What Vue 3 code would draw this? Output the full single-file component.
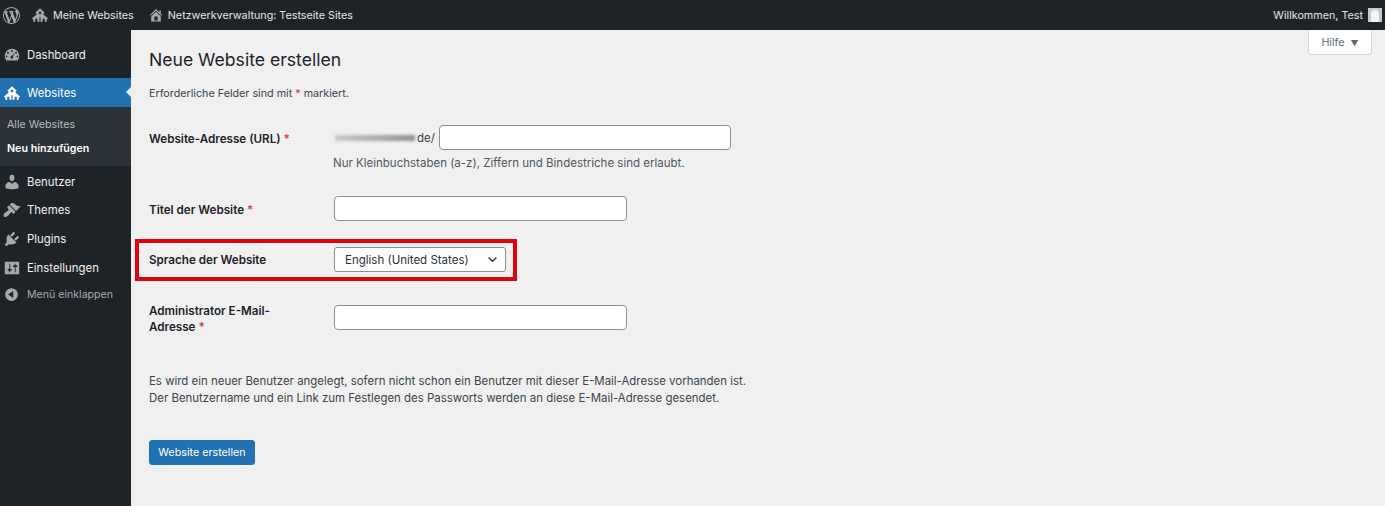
<script setup>
const wp = 'M20 10c0-5.51-4.49-10-10-10C4.48 0 0 4.49 0 10c0 5.52 4.48 10 10 10 5.51 0 10-4.48 10-10zM7.78 15.37L4.37 6.22c.55-.02 1.17-.08 1.17-.08.5-.06.44-1.13-.06-1.11 0 0-1.45.11-2.37.11-.18 0-.37 0-.58-.01C4.12 2.69 6.89 1.03 10 1.03c2.32 0 4.43.87 6.03 2.34-.68-.11-1.65.39-1.65 1.58 0 .74.45 1.37.9 2.1.35.61.55 1.36.55 2.46 0 1.49-1.4 5-1.4 5l-3.03-8.37c.54-.02.82-.17.82-.17.5-.05.44-1.25-.06-1.22 0 0-1.44.12-2.38.12-.87 0-2.33-.12-2.33-.12-.5-.03-.56 1.2-.06 1.22l.92.08 1.26 3.41zM17.41 10c.24-.64.74-1.87.43-4.25.7 1.29 1.05 2.71 1.05 4.25 0 3.29-1.73 6.24-4.4 7.8.97-2.59 1.94-5.15 2.92-7.8zM6.1 18.09C3.12 16.65 1.11 13.53 1.11 10c0-1.3.23-2.48.72-3.59C3.25 10.3 4.67 14.2 6.1 18.09zm4.03-6.63l2.58 6.98c-.86.29-1.74.45-2.71.45-.79 0-1.57-.11-2.29-.33.81-2.38 1.62-4.74 2.42-7.1z'
const multisite = 'M10 2.500l5.200 5-.8.8-.4-.4v1.900l5 4.200-.8.8-.7-.6v3.300H2.500v-3.300l-.7.6-.8-.8 5-4.200V7.900l-.4.4-.8-.8zM8.700 6.500v2.600h2.600V6.500zM4.700 14.300v3.200h2.400v-3.200zM12.900 14.300v3.200h2.400v-3.200zM9.400 12.500v5h1.200v-5z'
const home = 'M16 8.500l1.530 1.530-1.060 1.060L10 4.620l-6.470 6.470-1.060-1.060L10 2.500l4 4v-2h2v4zm-6-2.460l6 5.990V18H4v-5.970zM12 17v-5H8v5h4z'
const dash = 'M3.760 16h12.480C17.340 14.630 18 12.890 18 11c0-4.420-3.580-8-8-8s-8 3.580-8 8c0 1.890.660 3.630 1.760 5zM10 4.500a1 1 0 110 2 1 1 0 010-2zM5.500 6.500a1 1 0 110 2 1 1 0 010-2zM14.500 6.500a1 1 0 110 2 1 1 0 010-2zM4 10.500a1 1 0 110 2 1 1 0 010-2zM16 10.500a1 1 0 110 2 1 1 0 010-2zM13.200 7.600l-2.200 4.100a1.500 1.500 0 11-1.500-.7z'
const users = 'M10 9.250c-2.270 0-2.730-3.440-2.730-3.440C7 4.020 7.820 2 9.970 2c2.160 0 2.980 2.020 2.710 3.810 0 0-.41 3.440-2.680 3.440zm0 2.570L12.720 10c2.390 0 4.520 2.330 4.520 4.530v2.490s-3.650 1.130-7.240 1.130c-3.650 0-7.240-1.130-7.240-1.130v-2.490c0-2.250 1.940-4.480 4.470-4.480z'
const brush = 'M14.480 11.060L7.410 3.990l1.500-1.500c.5-.56 2.300-.47 3.510.32 1.210.8 1.430 1.280 2.910 2.100 1.180.64 2.450 1.260 4.450.85zm-.71.71L6.700 4.700 4.930 6.470c-.39.39-.39 1.020 0 1.410l1.060 1.060c.39.39.39 1.030 0 1.420-.6.6-1.430 1.110-2.210 1.690-.35.26-.7.53-1.010.84C1.430 13.230 0 15.800 1.100 17.300c1.100 1.300 3.600.2 4.900-1.200.3-.3.600-.7.840-1 .58-.78 1.090-1.610 1.690-2.210.39-.39 1.030-.39 1.420 0l1.060 1.060c.39.39 1.020.39 1.410 0z'
const plugin = 'M13.110 4.360L9.870 7.600 8 5.730l3.240-3.240c.35-.34 1.050-.2 1.560.32.52.51.66 1.210.31 1.550zm-8 1.770l.91-1.120 9.010 9.010-1.190.84c-.71.71-2.630 1.160-3.820 1.160H6.140L4.900 17.260c-.59.59-1.540.59-2.120 0-.59-.58-.59-1.530 0-2.120l1.240-1.240v-3.880c0-1.130.39-3.040 1.090-3.890zm7.260 3.970l3.240-3.240c.34-.35 1.040-.21 1.550.31.52.51.66 1.210.31 1.550l-3.240 3.250z'
const settings = 'M18 16V4c0-.55-.45-1-1-1H3c-.55 0-1 .45-1 1v12c0 .55.45 1 1 1h14c.55 0 1-.45 1-1zM8 11h1c.55 0 1 .45 1 1s-.45 1-1 1H8v1.500c0 .28-.22.5-.5.5s-.5-.22-.5-.5V13H6c-.55 0-1-.45-1-1s.45-1 1-1h1V5.500c0-.28.22-.5.5-.5s.5.22.5.5V11zm5-2h-1c-.55 0-1-.45-1-1s.45-1 1-1h1V5.500c0-.28.22-.5.5-.5s.5.22.5.5V7h1c.55 0 1 .45 1 1s-.45 1-1 1h-1v5.500c0 .28-.22.5-.5.5s-.5-.22-.5-.5V9z'
const collapse = 'M10 2.500a7.500 7.500 0 110 15 7.500 7.500 0 010-15zM12 6l-6 4 6 4z'

const items = [
  { label: 'Benutzer', icon: users, h: 27 },
  { label: 'Themes', icon: brush, h: 29 },
  { label: 'Plugins', icon: plugin, h: 29 },
  { label: 'Einstellungen', icon: settings, h: 29 }
]
</script>

<template>
  <div class="page">
    <header class="bar">
      <div class="bar-left">
        <svg class="wp" viewBox="0 0 20 20"><path :d="wp" fill-rule="evenodd" /></svg>
        <svg class="bar-ms" viewBox="0 0 20 20"><path :d="multisite" fill-rule="evenodd" /></svg>
        <span class="bar-text">Meine Websites</span>
        <svg class="bar-home" viewBox="0 0 20 20"><path :d="home" fill-rule="evenodd" /></svg>
        <span class="bar-text">Netzwerkverwaltung: Testseite Sites</span>
      </div>
      <div class="bar-right">
        <span class="bar-text">Willkommen, Test</span>
        <span class="avatar"><i></i></span>
      </div>
    </header>

    <div class="body">
      <aside class="side">
        <div class="item first">
          <svg viewBox="0 0 20 20"><path :d="dash" fill-rule="evenodd" /></svg>
          <span>Dashboard</span>
        </div>
        <div class="item current">
          <svg viewBox="0 0 20 20"><path :d="multisite" fill-rule="evenodd" /></svg>
          <span>Websites</span>
          <b class="notch"></b>
        </div>
        <div class="sub">
          <div class="sub-a">Alle Websites</div>
          <div class="sub-b">Neu hinzufügen</div>
        </div>
        <div class="list">
          <div v-for="it in items" :key="it.label" class="item" :style="{ height: it.h + 'px' }">
            <svg viewBox="0 0 20 20"><path :d="it.icon" fill-rule="evenodd" /></svg>
            <span>{{ it.label }}</span>
          </div>
          <div class="item fold">
            <svg viewBox="0 0 20 20"><path :d="collapse" fill-rule="evenodd" /></svg>
            <span>Menü einklappen</span>
          </div>
        </div>
      </aside>

      <main class="main">
        <button class="help">Hilfe <em>▼</em></button>
        <h1>Neue Website erstellen</h1>
        <p class="req">Erforderliche Felder sind mit <span class="star">*</span> markiert.</p>

        <div class="row r1">
          <label>Website-Adresse (URL) <span class="star">*</span></label>
          <div class="field">
            <div class="url">
              <span class="blur"></span><span class="dom">de/</span>
              <input class="in wide" type="text" />
            </div>
            <p class="hint">Nur Kleinbuchstaben (a-z), Ziffern und Bindestriche sind erlaubt.</p>
          </div>
        </div>

        <div class="row r2">
          <label>Titel der Website <span class="star">*</span></label>
          <input class="in" type="text" />
        </div>

        <div class="row r3">
          <label>Sprache der Website</label>
          <div class="select">
            <span>English (United States)</span>
            <svg viewBox="0 0 12 8"><path d="M1.500 1.800L6 6l4.500-4.200" fill="none" stroke="#2c3338" stroke-width="1.500" /></svg>
          </div>
          <span class="mark"></span>
        </div>

        <div class="row r4">
          <label>Administrator E-Mail-<br />Adresse <span class="star">*</span></label>
          <input class="in" type="text" />
        </div>

        <p class="info">Es wird ein neuer Benutzer angelegt, sofern nicht schon ein Benutzer mit dieser E-Mail-Adresse vorhanden ist.<br />Der Benutzername und ein Link zum Festlegen des Passworts werden an diese E-Mail-Adresse gesendet.</p>

        <button class="submit">Website erstellen</button>
      </main>
    </div>
  </div>
</template>

<style>
html, body { margin: 0; background: #f0f0f1; overflow: hidden; }
</style>

<style scoped>
.page { width: 1385px; height: 506px; overflow: hidden; font-family: Inter, "Liberation Sans", sans-serif; font-size: 11.500px; color: #3c434a; display: flex; flex-direction: column; background: #f0f0f1; }
.bar { height: 30px; flex: none; background: #1d2327; display: flex; justify-content: space-between; align-items: center; color: #f0f0f1; }
.bar-left, .bar-right { display: flex; align-items: center; }
.bar-text { font-size: 10.750px; color: #e4e6e7; }
.wp { width: 17px; height: 17px; margin-left: 3px; fill: #a7aaad; }
.bar-ms { width: 18px; height: 18px; margin-left: 11px; margin-right: 4px; fill: #a7aaad; }
.bar-home { width: 16px; height: 16px; margin-left: 14px; margin-right: 4px; fill: #a7aaad; }
.bar-right { padding-right: 3px; }
.avatar { width: 14px; height: 14px; margin-left: 5px; background: #c9c9c9; display: block; position: relative; overflow: hidden; }
.avatar i { position: absolute; left: 3px; top: 2px; width: 8px; height: 14px; border-radius: 4px; background: #f4f4f4; }
.body { flex: 1; display: flex; min-height: 0; }
.side { width: 131px; flex: none; background: #1d2327; display: flex; flex-direction: column; }
.item { display: flex; align-items: center; height: 29px; color: #f0f0f1; font-size: 11.400px; position: relative; }
.item svg { width: 18px; height: 18px; margin-left: 3px; margin-right: 6px; fill: #a7aaad; flex: none; }
.first { margin-top: 10px; margin-bottom: 9px; }
.current { background: #2271b1; color: #fff; }
.current svg { fill: #fff; }
.notch { position: absolute; right: 0; top: 9px; border: 5.500px solid transparent; border-right-color: #f0f0f1; border-left-width: 0; }
.sub { background: #2c3338; height: 59px; padding-left: 7px; font-size: 10.700px; box-sizing: border-box; padding-top: 10px; }
.sub-a { color: #b8babc; height: 24px; line-height: 15px; box-sizing: border-box; }
.sub-b { color: #fff; font-weight: 600; line-height: 15px; }
.list { padding-top: 2px; }
.fold { color: #a7aaad; font-size: 10.600px; height: 27px; margin-top: -1px; }
.fold svg { width: 17px; height: 17px; margin-right: 7px; }
.main { flex: 1; padding-left: 18px; position: relative; min-width: 0; }
.help { position: absolute; right: 13px; top: 0; width: 64px; height: 25px; box-sizing: border-box; background: #fff; border: 1px solid #d5d6d7; border-top: 0; border-radius: 0 0 4px 4px; color: #646970; font: 10.750px Inter, sans-serif; padding: 0; }
.help em { font-style: normal; font-size: 8px; margin-left: 3px; }
h1 { margin: 18px 0 0; font-size: 17.600px; font-weight: 400; line-height: 23px; color: #1d2327; }
.req { margin: 15px 0 0; line-height: 16px; font-size: 10.750px; }
.star { color: #d63638; }
.row { display: flex; position: relative; }
.row > label { width: 185px; flex: none; font-weight: 600; font-size: 11.650px; color: #1d2327; line-height: 16px; }
.in { width: 293px; height: 25px; box-sizing: border-box; background: #fff; border: 1px solid #8c8f94; border-radius: 4px; padding: 0; margin: 0; display: block; outline: 0; }
.in.wide { width: 292px; }
.r1 { margin-top: 23px; }
.r1 > label { padding-top: 6px; }
.url { display: flex; align-items: center; height: 25px; margin-left: -1px; }
.blur { width: 80px; height: 6px; background: linear-gradient(90deg, #c8c9ca, #a0a1a3 70%, #8f9092); filter: blur(1.500px); margin-left: 2px; margin-top: 1px; flex: none; }
.dom { width: 22px; margin-left: 2px; box-sizing: border-box; font-size: 11.500px; flex: none; }
.hint { margin: 5px -1px 0 -1px; line-height: 16px; color: #50575e; font-size: 11.500px; }
.r2 { margin-top: 25px; align-items: center; }
.r2 > label { padding-top: 2px; }
.r3 { margin-top: 26px; align-items: center; }
.r3 > label { padding-top: 1px; }
.select { width: 172px; height: 25px; box-sizing: border-box; background: #fff; border: 1px solid #8c8f94; border-radius: 3px; display: flex; align-items: center; justify-content: space-between; padding: 0 7px 0 10px; color: #2c3338; font-size: 11.500px; }
.select svg { width: 11px; height: 7px; }
.mark { position: absolute; left: -14px; top: -8px; width: 382px; height: 42px; box-sizing: border-box; border: 4px solid #e0040f; pointer-events: none; }
.r4 { margin-top: 33px; }
.r4 > label { margin-top: -2px; }
.info { margin: 38px 0 0; font-size: 11.450px; line-height: 17px; color: #3c434a; }
.submit { display: block; margin-top: 33px; width: 106px; height: 25px; background: #2271b1; border: 1px solid #2271b1; border-radius: 3px; color: #fff; font: 10.750px Inter, sans-serif; padding: 0; }
</style>
